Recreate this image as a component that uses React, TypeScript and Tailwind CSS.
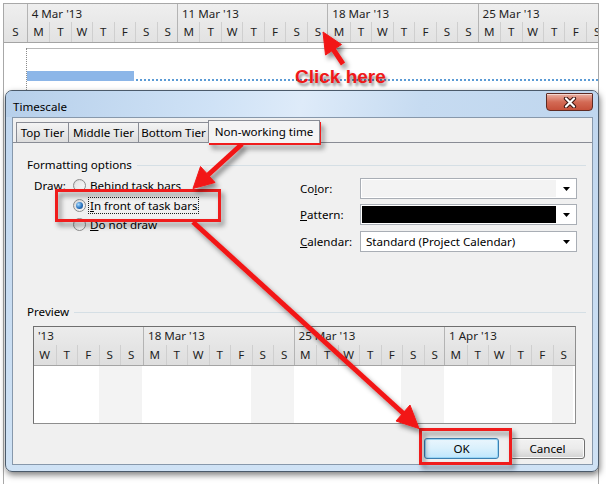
import React from "react";

const DAYS = ["M", "T", "W", "T", "F", "S", "S"];
const ganttWeeks = ["4 Mar '13", "11 Mar '13", "18 Mar '13", "25 Mar '13"];

function GanttHeader() {
  return (
    <div className="flex h-[39px] shrink-0 overflow-hidden border-b border-[#a4a4a4] bg-gradient-to-b from-[#efefef] to-[#e2e2e2] text-[11.6px] text-[#1e1e1e]">
      <div className="flex w-[22.7px] shrink-0 flex-col">
        <div className="h-[18px]" />
        <div className="flex h-[20px] items-center justify-center">S</div>
      </div>
      {ganttWeeks.map((w, wi) => (
        <div key={w} className="flex w-[150.3px] shrink-0 flex-col border-l border-[#b4b4b4]">
          <div className="h-[18px] pl-[4px] pt-[1px] leading-[18px]">{w}</div>
          <div className="flex h-[20px]">
            {(wi === 3 ? DAYS.slice(0, 6) : DAYS).map((d, i) => (
              <div
                key={i}
                className={
                  i > 0
                    ? "flex w-[21.47px] shrink-0 items-center justify-center border-l border-[#cfcfcf]"
                    : "flex w-[21.47px] shrink-0 items-center justify-center"
                }
              >
                {d}
              </div>
            ))}
          </div>
        </div>
      ))}
    </div>
  );
}

const previewWeeks: { label: string; days: string[]; w: string }[] = [
  { label: "'13", days: ["W", "T", "F", "S", "S"], w: "w-[109px]" },
  { label: "18 Mar '13", days: DAYS, w: "w-[150.5px]" },
  { label: "25 Mar '13", days: DAYS, w: "w-[150.5px]" },
  { label: "1 Apr '13", days: DAYS.slice(0, 6), w: "w-[130px]" },
];

function PreviewBox() {
  return (
    <div className="ml-[6px] mt-[6px] flex h-[98px] w-[543px] flex-col overflow-hidden border border-[#8e8e8e] border-l-[#6f6f6f] border-t-[#6f6f6f] bg-white">
      <div className="flex h-[39px] shrink-0 border-b border-[#a4a4a4] bg-gradient-to-b from-[#ececec] to-[#dedede] text-[11.6px] text-[#1e1e1e]">
        {previewWeeks.map((wk, wi) => (
          <div
            key={wi}
            className={
              wi > 0
                ? `flex ${wk.w} shrink-0 flex-col border-l border-[#b4b4b4]`
                : `flex ${wk.w} shrink-0 flex-col`
            }
          >
            <div className="h-[18px] pl-[4px] leading-[18px]">{wk.label}</div>
            <div className="flex h-[20px]">
              {wk.days.map((d, i) => (
                <div
                  key={i}
                  className={
                    i > 0
                      ? "flex w-[21.5px] shrink-0 items-center justify-center border-l border-[#cfcfcf]"
                      : "flex w-[21.5px] shrink-0 items-center justify-center"
                  }
                >
                  {d}
                </div>
              ))}
            </div>
          </div>
        ))}
      </div>
      <div className="flex flex-1">
        {previewWeeks.map((wk, wi) => (
          <div key={wi} className={`flex ${wk.w} shrink-0`}>
            {wk.days.map((d, i) => {
              const weekend = (wi === 0 && i >= 3) || (wi > 0 && i >= 5);
              return (
                <div
                  key={i}
                  className={
                    weekend
                      ? "w-[21.5px] shrink-0 bg-[#f3f3f3]"
                      : "w-[21.5px] shrink-0 bg-white"
                  }
                />
              );
            })}
          </div>
        ))}
      </div>
    </div>
  );
}

function Radio({ checked }: { checked?: boolean }) {
  return (
    <div className="flex h-[13px] w-[13px] shrink-0 items-center justify-center rounded-full border border-[#8b8b8b] bg-gradient-to-br from-[#d6d6d6] to-[#fbfbfb]">
      {checked ? (
        <div className="h-[7px] w-[7px] rounded-full bg-[radial-gradient(circle_at_35%_35%,#a9dcff,#2a74c0_55%,#123f78)]" />
      ) : (
        <div className="h-[9px] w-[9px] rounded-full bg-gradient-to-br from-[#e4e4e4] to-[#f8f8f8]" />
      )}
    </div>
  );
}

function ComboArrow() {
  return (
    <div className="flex flex-1 items-center justify-center">
      <svg width="7" height="4" viewBox="0 0 7 4">
        <path d="M0 0h7L3.5 4z" fill="#000" />
      </svg>
    </div>
  );
}

function Dialog() {
  return (
    <div className="absolute left-[5px] top-[90px] flex h-[382px] w-[594px] flex-col rounded-[7px] border border-[#4b5a6a] bg-gradient-to-b from-[#c0d6ee] to-[#cfe2f5] pb-[6px] pl-[6px] pr-[5px] shadow-[1px_3px_6px_rgba(0,0,0,0.5)]">
      {/* title bar */}
      <div className="-ml-[6px] -mr-[5px] flex h-[26px] shrink-0 items-start rounded-t-[6px] bg-[linear-gradient(100deg,#b6cfea_0%,#cfe2f6_35%,#deebf9_50%,#c6dbf1_70%,#bfd6ee_100%)] pl-[7px]">
        <div className="pt-[8px] text-[11.6px] leading-[16px] text-black">Timescale</div>
        <div className="ml-auto mr-[5px] mt-[2px] flex h-[18px] w-[47px] items-center justify-center rounded-b-[4px] rounded-t-[1px] border border-[#5e2a22] bg-gradient-to-b from-[#eab1a4] via-[#d36a55] to-[#c6503a] shadow-[inset_0_1px_0_rgba(255,255,255,0.5)]">
          <svg width="14" height="11" viewBox="0 0 14 11">
            <path d="M3 1.5L11 9.5M11 1.5L3 9.5" stroke="#3b1410" strokeWidth="4.2" strokeLinecap="round" />
            <path d="M3 1.5L11 9.5M11 1.5L3 9.5" stroke="#ffffff" strokeWidth="2.2" strokeLinecap="round" />
          </svg>
        </div>
      </div>
      {/* client */}
      <div className="flex h-[348px] flex-col border border-[#8798ab] bg-[#f0f0f0] text-[11.6px] leading-[16px] text-black">
        {/* tabs */}
        <div className="flex h-[25px] shrink-0 items-end border-b border-[#898c95] pl-[3px]">
          <div className="flex h-[20px] w-[53px] justify-center border border-b-0 border-[#898c95] bg-gradient-to-b from-[#f4f4f4] to-[#dddddd] pt-[2px]">
            Top Tier
          </div>
          <div className="-ml-px flex h-[20px] w-[71px] justify-center border border-b-0 border-[#898c95] bg-gradient-to-b from-[#f4f4f4] to-[#dddddd] pt-[2px]">
            Middle Tier
          </div>
          <div className="-ml-px flex h-[20px] w-[71px] justify-center border border-b-0 border-[#898c95] bg-gradient-to-b from-[#f4f4f4] to-[#dddddd] pt-[2px]">
            Bottom Tier
          </div>
          <div className="relative z-10 -mb-px -ml-px flex h-[23px] w-[112px] justify-center border border-b-0 border-[#898c95] bg-[#f4f4f4] pt-[3px]">
            Non-working time
          </div>
        </div>
        {/* panel */}
        <div className="flex flex-1 flex-col pl-[14px]">
          <div className="mt-[14px] flex h-[16px] items-center">
            <span>Formatting options</span>
            <div className="ml-[5px] mr-[6px] h-px flex-1 bg-[#d5dfe5]" />
          </div>
          <div className="flex">
            <div className="ml-[7px] w-[266px] pt-[3px]">
              <div className="flex h-[19px] items-center">
                <span className="w-[39px]">Draw:</span>
                <Radio />
                <span className="ml-[3px] px-[1px]">
                  <u>B</u>ehind task bars
                </span>
              </div>
              <div className="flex h-[20px] items-center pl-[39px]">
                <Radio checked />
                <span className="ml-[2px] border border-dotted border-[#202020] px-[1px] leading-[15px]">
                  <u>I</u>n front of task bars
                </span>
              </div>
              <div className="flex h-[19px] items-center pl-[39px]">
                <Radio />
                <span className="ml-[3px] px-[1px]">
                  <u>D</u>o not draw
                </span>
              </div>
            </div>
            <div className="pt-[5px]">
              <div className="flex h-[21px] items-center">
                <span className="w-[60px]">
                  Co<u>l</u>or:
                </span>
                <div className="flex h-[21px] w-[217px] items-center border border-[#a9aeb5] bg-white pl-px">
                  <div className="h-[17px] w-[194px] bg-[#f3f3f3]" />
                  <ComboArrow />
                </div>
              </div>
              <div className="mt-[5px] flex h-[21px] items-center">
                <span className="w-[60px]">
                  <u>P</u>attern:
                </span>
                <div className="flex h-[21px] w-[217px] items-center border border-[#a9aeb5] bg-white pl-px">
                  <div className="h-[17px] w-[194px] bg-black" />
                  <ComboArrow />
                </div>
              </div>
              <div className="mt-[6px] flex h-[21px] items-center">
                <span className="w-[60px]">
                  <u>C</u>alendar:
                </span>
                <div className="flex h-[21px] w-[217px] items-center border border-[#a9aeb5] bg-white">
                  <span className="w-[195px] pl-[5px]">Standard (Project Calendar)</span>
                  <ComboArrow />
                </div>
              </div>
            </div>
          </div>
          <div className="mt-[52px] flex h-[16px] items-center">
            <span>Preview</span>
            <div className="ml-[5px] mr-[6px] h-px flex-1 bg-[#d5dfe5]" />
          </div>
          <PreviewBox />
          <div className="mr-[7px] mt-[14px] flex justify-end gap-[11px]">
            <div className="flex h-[21px] w-[75px] items-center justify-center rounded-[3px] border border-[#3c7fb1] bg-gradient-to-b from-[#eaf6fd] via-[#d9f0fc] to-[#bee6fd] shadow-[inset_0_0_0_1px_#9ad6f5]">
              OK
            </div>
            <div className="flex h-[21px] w-[75px] items-center justify-center rounded-[3px] border border-[#707070] bg-gradient-to-b from-[#f2f2f2] via-[#ebebeb] to-[#d2d2d2] shadow-[inset_0_0_0_1px_#fbfbfb]">
              Cancel
            </div>
          </div>
        </div>
      </div>
    </div>
  );
}

function Annotations() {
  return (
    <>
      <svg
        className="pointer-events-none absolute left-0 top-0"
        width="606"
        height="484"
        viewBox="0 0 606 484"
      >
        <defs>
          <filter id="sh" x="-30%" y="-30%" width="160%" height="160%">
            <feDropShadow dx="3" dy="4" stdDeviation="2.5" floodColor="#000" floodOpacity="0.45" />
          </filter>
        </defs>
        <g filter="url(#sh)">
          <rect x="210.5" y="123.5" width="109" height="20" fill="none" stroke="#f01a1a" strokeWidth="3" />
          <rect x="56.5" y="190.5" width="163" height="30" fill="none" stroke="#f01a1a" strokeWidth="3" />
          <rect x="420.5" y="429.5" width="90" height="34" fill="none" stroke="#f01a1a" strokeWidth="3" />
        </g>
        <g filter="url(#sh)" fill="#f21818" stroke="#f21818">
          <line x1="333" y1="49" x2="343" y2="64" strokeWidth="5" />
          <polygon points="323,32 325.5,55 341.5,44.5" strokeWidth="1" />
          <line x1="208" y1="175" x2="242" y2="144" strokeWidth="5" />
          <polygon points="193,188.5 200.5,166.5 215,182.5" strokeWidth="1" />
          <line x1="193" y1="222" x2="404" y2="414" strokeWidth="5" />
          <polygon points="419,428.5 396,421 410,405" strokeWidth="1" />
        </g>
      </svg>
      <div className="absolute left-[295px] top-[67px] font-['Liberation_Sans',Arial,sans-serif] text-[19px] font-bold leading-[19px] text-[#f01818] [text-shadow:2px_3px_3px_rgba(0,0,0,0.45)]">
        Click here
      </div>
    </>
  );
}

export default function App() {
  return (
    <div className="relative h-[484px] w-[606px] overflow-hidden bg-white font-['Noto_Sans',sans-serif]">
      <div className="ml-[3px] mt-[3px] flex h-[481px] w-[596px] flex-col border-l border-r border-t border-[#a8a8a8]">
        <GanttHeader />
        <div className="ml-[22px] mt-[5px] h-[50px] border-l border-dotted border-[#8a8a8a]">
          <div className="h-px bg-[#b8b8b8]" />
          <div className="mt-[22px] flex items-end">
            <div className="h-[10px] w-[107px] bg-[#8cb6e8]" />
            <div className="ml-[2px] flex-1 border-b-2 border-dotted border-[#5b9bd5]" />
          </div>
        </div>
      </div>
      <Dialog />
      <Annotations />
    </div>
  );
}
